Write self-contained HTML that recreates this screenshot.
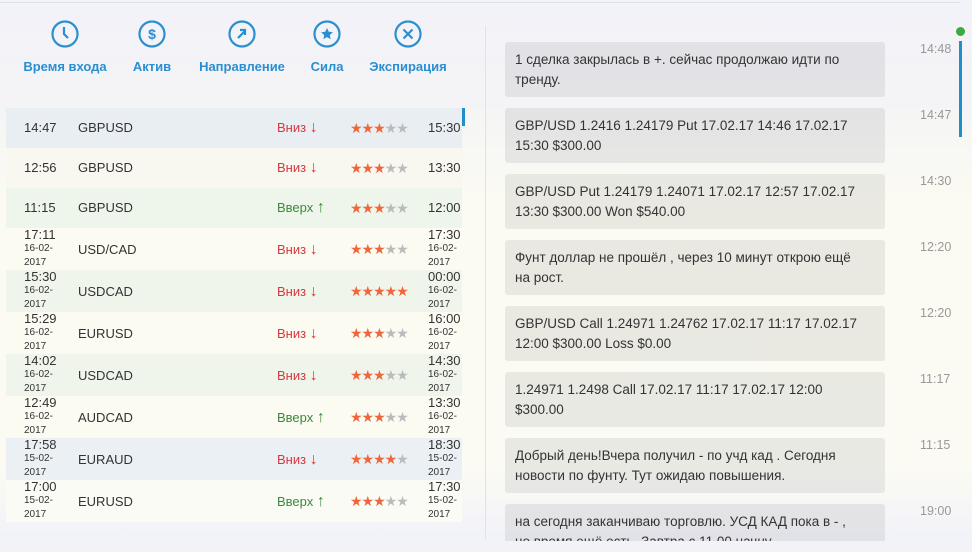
<!DOCTYPE html>
<html><head><meta charset="utf-8"><style>
*{margin:0;padding:0;box-sizing:border-box}
body{width:972px;height:552px;overflow:hidden;position:relative;font-family:"Liberation Sans","DejaVu Sans",sans-serif;background:linear-gradient(#f2f2f9 0,#f4f4f6 100px,#fbfbf2 200px,#fbfbf3 470px,#f2f2f9 535px,#f2f2f9 552px);color:#333}
.topline{position:absolute;left:0;top:2px;width:960px;height:1px;background:#e0e0ea}
.hdr{position:absolute;top:20px;text-align:center;color:#2a8fd0;font-weight:bold;font-size:13px}
.hdr svg{display:block;margin:0 auto 11px}
.row{position:absolute;left:6px;width:456px;font-size:13px}
.row>span{position:absolute}
.t{left:18px;color:#333}
.big{font-size:13px;line-height:14px}
.sm{font-size:10px;line-height:14px;display:block}
.dn{color:#d9363e}.up{color:#3a8a3a}
.ar{font-size:16px}
.st{color:#f0653a;font-size:14px;letter-spacing:-1px;top:12px}
.st i{color:#bbb;font-style:normal}
.bub{position:absolute;left:505px;width:380px;background:rgba(60,60,70,0.09);border-radius:3px;padding:8px 22px 8px 10px;font-size:13.5px;line-height:20px;color:#333}
.tm{position:absolute;left:920px;font-size:12.5px;color:#999}
</style></head><body>
<div class="topline"></div>
<div class="hdr" style="left:22px;width:86px"><svg width="28" height="28" viewBox="0 0 28 28"><circle cx="14" cy="14" r="12.5" fill="none" stroke="#2a8fd0" stroke-width="2.2"/><path d="M13 7v7l4 4" fill="none" stroke="#2a8fd0" stroke-width="2.2"/></svg>Время входа</div>
<div class="hdr" style="left:128px;width:48px"><svg width="28" height="28" viewBox="0 0 28 28"><circle cx="14" cy="14" r="12.5" fill="none" stroke="#2a8fd0" stroke-width="2.2"/><text x="14" y="19" text-anchor="middle" font-size="14" font-weight="bold" fill="#2a8fd0" font-family="Liberation Sans">$</text></svg>Актив</div>
<div class="hdr" style="left:196px;width:92px"><svg width="28" height="28" viewBox="0 0 28 28"><circle cx="14" cy="14" r="12.5" fill="none" stroke="#2a8fd0" stroke-width="2.2"/><path d="M10 18l7-7M12 10h5v5" fill="none" stroke="#2a8fd0" stroke-width="2.2"/></svg>Направление</div>
<div class="hdr" style="left:308px;width:38px"><svg width="28" height="28" viewBox="0 0 28 28"><circle cx="14" cy="14" r="12.5" fill="none" stroke="#2a8fd0" stroke-width="2.2"/><path d="M14 8l1.8 3.8 4 .5-3 2.8.8 4-3.6-2-3.6 2 .8-4-3-2.8 4-.5z" fill="#2a8fd0"/></svg>Сила</div>
<div class="hdr" style="left:366px;width:84px"><svg width="28" height="28" viewBox="0 0 28 28"><circle cx="14" cy="14" r="12.5" fill="none" stroke="#2a8fd0" stroke-width="2.2"/><path d="M9.5 9.5l9 9M18.5 9.5l-9 9" fill="none" stroke="#2a8fd0" stroke-width="2.2"/></svg>Экспирация</div>

<div style="position:absolute;left:462px;top:108px;width:3px;height:18px;background:#1e8fc8"></div>

<div class="row" style="top:108px;height:40px;background:#e9eef3"><span class="t" style="top:12px">14:47</span><span style="left:72px;top:12px">GBPUSD</span><span class="dn" style="left:271px;top:11px">Вниз <b class="ar" style="font-weight:normal">↓</b></span><span class="st" style="left:344px">★★★<i>★★</i></span><span style="left:422px;top:12px">15:30</span></div>
<div class="row" style="top:148px;height:40px;background:#f8f8f0"><span class="t" style="top:12px">12:56</span><span style="left:72px;top:12px">GBPUSD</span><span class="dn" style="left:271px;top:11px">Вниз <b class="ar" style="font-weight:normal">↓</b></span><span class="st" style="left:344px">★★★<i>★★</i></span><span style="left:422px;top:12px">13:30</span></div>
<div class="row" style="top:188px;height:40px;background:#eef5ea"><span class="t" style="top:12px">11:15</span><span style="left:72px;top:12px">GBPUSD</span><span class="up" style="left:271px;top:11px">Вверх <b class="ar" style="font-weight:normal">↑</b></span><span class="st" style="left:344px">★★★<i>★★</i></span><span style="left:422px;top:12px">12:00</span></div>

<div class="row" style="top:228px;height:42px;background:#fbfbf2"><span class="t big" style="top:0">17:11<span class="sm">16-02-</span><span class="sm">2017</span></span><span style="left:72px;top:14px">USD/CAD</span><span class="dn" style="left:271px;top:13px">Вниз <b class="ar" style="font-weight:normal">↓</b></span><span class="st" style="left:344px;top:13px">★★★<i>★★</i></span><span class="big" style="left:422px;top:0">17:30<span class="sm">16-02-</span><span class="sm">2017</span></span></div>
<div class="row" style="top:270px;height:42px;background:#f0f5eb"><span class="t big" style="top:0">15:30<span class="sm">16-02-</span><span class="sm">2017</span></span><span style="left:72px;top:14px">USDCAD</span><span class="dn" style="left:271px;top:13px">Вниз <b class="ar" style="font-weight:normal">↓</b></span><span class="st" style="left:344px;top:13px">★★★★★</span><span class="big" style="left:422px;top:0">00:00<span class="sm">16-02-</span><span class="sm">2017</span></span></div>
<div class="row" style="top:312px;height:42px;background:#fbfbf2"><span class="t big" style="top:0">15:29<span class="sm">16-02-</span><span class="sm">2017</span></span><span style="left:72px;top:14px">EURUSD</span><span class="dn" style="left:271px;top:13px">Вниз <b class="ar" style="font-weight:normal">↓</b></span><span class="st" style="left:344px;top:13px">★★★<i>★★</i></span><span class="big" style="left:422px;top:0">16:00<span class="sm">16-02-</span><span class="sm">2017</span></span></div>
<div class="row" style="top:354px;height:42px;background:#f0f5eb"><span class="t big" style="top:0">14:02<span class="sm">16-02-</span><span class="sm">2017</span></span><span style="left:72px;top:14px">USDCAD</span><span class="dn" style="left:271px;top:13px">Вниз <b class="ar" style="font-weight:normal">↓</b></span><span class="st" style="left:344px;top:13px">★★★<i>★★</i></span><span class="big" style="left:422px;top:0">14:30<span class="sm">16-02-</span><span class="sm">2017</span></span></div>
<div class="row" style="top:396px;height:42px;background:#fbfbf2"><span class="t big" style="top:0">12:49<span class="sm">16-02-</span><span class="sm">2017</span></span><span style="left:72px;top:14px">AUDCAD</span><span class="up" style="left:271px;top:13px">Вверх <b class="ar" style="font-weight:normal">↑</b></span><span class="st" style="left:344px;top:13px">★★★<i>★★</i></span><span class="big" style="left:422px;top:0">13:30<span class="sm">16-02-</span><span class="sm">2017</span></span></div>
<div class="row" style="top:438px;height:42px;background:#ebf0f4"><span class="t big" style="top:0">17:58<span class="sm">15-02-</span><span class="sm">2017</span></span><span style="left:72px;top:14px">EURAUD</span><span class="dn" style="left:271px;top:13px">Вниз <b class="ar" style="font-weight:normal">↓</b></span><span class="st" style="left:344px;top:13px">★★★★<i>★</i></span><span class="big" style="left:422px;top:0">18:30<span class="sm">15-02-</span><span class="sm">2017</span></span></div>
<div class="row" style="top:480px;height:42px;background:#fbfbf6"><span class="t big" style="top:0">17:00<span class="sm">15-02-</span><span class="sm">2017</span></span><span style="left:72px;top:14px">EURUSD</span><span class="up" style="left:271px;top:13px">Вверх <b class="ar" style="font-weight:normal">↑</b></span><span class="st" style="left:344px;top:13px">★★★<i>★★</i></span><span class="big" style="left:422px;top:0">17:30<span class="sm">15-02-</span><span class="sm">2017</span></span></div>

<div style="position:absolute;left:485px;top:26px;width:1px;height:514px;background:#e2e2e6"></div>

<div style="position:absolute;left:0;top:0;width:972px;height:541px;overflow:hidden">
<div class="bub" style="top:42px;height:55px">1 сделка закрылась в +. сейчас продолжаю идти по тренду.</div>
<div class="bub" style="top:108px;height:55px">GBP/USD 1.2416 1.24179 Put 17.02.17 14:46 17.02.17 15:30 $300.00</div>
<div class="bub" style="top:174px;height:55px">GBP/USD Put 1.24179 1.24071 17.02.17 12:57 17.02.17 13:30 $300.00 Won $540.00</div>
<div class="bub" style="top:240px;height:55px">Фунт доллар не прошёл , через 10 минут открою ещё на рост.</div>
<div class="bub" style="top:306px;height:55px">GBP/USD Call 1.24971 1.24762 17.02.17 11:17 17.02.17 12:00 $300.00 Loss $0.00</div>
<div class="bub" style="top:372px;height:55px">1.24971 1.2498 Call 17.02.17 11:17 17.02.17 12:00 $300.00</div>
<div class="bub" style="top:438px;height:55px">Добрый день!Вчера получил - по учд кад . Сегодня новости по фунту. Тут ожидаю повышения.</div>
<div class="bub" style="top:504px;height:60px;padding-top:8px">на сегодня заканчиваю торговлю. УСД КАД пока в - , но время ещё есть. Завтра с 11.00 начну</div>
</div>
<div class="tm" style="top:42px">14:48</div>
<div class="tm" style="top:108px">14:47</div>
<div class="tm" style="top:174px">14:30</div>
<div class="tm" style="top:240px">12:20</div>
<div class="tm" style="top:306px">12:20</div>
<div class="tm" style="top:372px">11:17</div>
<div class="tm" style="top:438px">11:15</div>
<div class="tm" style="top:504px">19:00</div>
<div style="position:absolute;left:956px;top:27px;width:9px;height:9px;border-radius:50%;background:#3caa3c"></div>
<div style="position:absolute;left:959px;top:41px;width:3px;height:96px;background:#1e8fc8"></div>
</body></html>
